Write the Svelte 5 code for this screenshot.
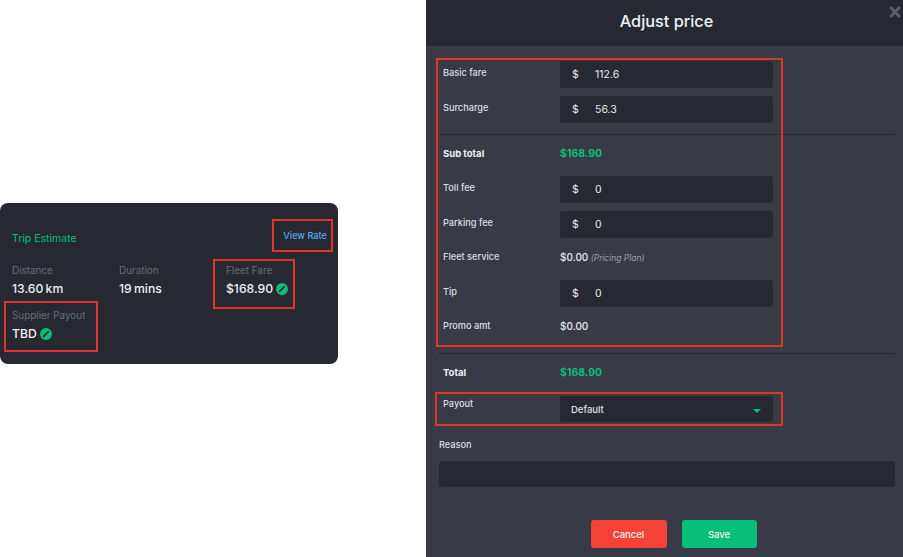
<script>
  const topRows = [
    { label: "Basic fare", value: "112.6" },
    { label: "Surcharge", value: "56.3" }
  ]
  const midRows = [
    { label: "Toll fee", value: "0" },
    { label: "Parking fee", value: "0" },
    { label: "Fleet service", text: "$0.00", note: "(Pricing Plan)" },
    { label: "Tip", value: "0" },
    { label: "Promo amt", text: "$0.00" }
  ]
</script>

{#snippet pencil()}
  <svg class="edit" viewBox="0 0 12 12" aria-hidden="true">
    <circle cx="6" cy="6" r="6" fill="#07bf78" />
    <path d="M3.6 8.4 L8.3 3.7" stroke="#20232b" stroke-width="1.6" stroke-linecap="round" />
  </svg>
{/snippet}

{#snippet row(r)}
  <div class="row">
    <span class="label">{r.label}</span>
    {#if r.value !== undefined}
      <div class="field">
        <span class="addon">$</span>
        <input value={r.value} />
      </div>
    {:else}
      <span class="static">{r.text}{#if r.note}<em>&nbsp;{r.note}</em>{/if}</span>
    {/if}
  </div>
{/snippet}

<div class="page">
  <div class="left">
    <section class="card">
      <div class="card-head">
        <h3>Trip Estimate</h3>
        <a href="#rate">View Rate</a>
        <i class="mark mark-rate"></i>
      </div>
      <div class="stats">
        <div class="stat">
          <span>Distance</span>
          <b>13.60 km</b>
        </div>
        <div class="stat">
          <span>Duration</span>
          <b>19 mins</b>
        </div>
        <div class="stat">
          <span>Fleet Fare</span>
          <b>$168.90 {@render pencil()}</b>
          <i class="mark mark-fare"></i>
        </div>
        <div class="stat">
          <span>Supplier Payout</span>
          <b>TBD {@render pencil()}</b>
          <i class="mark mark-payout"></i>
        </div>
      </div>
    </section>
  </div>

  <aside class="panel">
    <header>
      <h2>Adjust price</h2>
      <svg class="close" viewBox="0 0 12 12" aria-hidden="true">
        <path d="M1.2 1 L10.8 11 M10.8 1 L1.2 11" stroke="#5d616c" stroke-width="2.6" />
      </svg>
    </header>

    <div class="body">
      <i class="mark mark-fees"></i>
      <i class="mark mark-select"></i>

      {#each topRows as r}
        {@render row(r)}
      {/each}
      <hr />
      <div class="row">
        <span class="label strong">Sub total</span>
        <span class="static money">$168.90</span>
      </div>
      {#each midRows as r}
        {@render row(r)}
      {/each}
      <hr class="lower" />
      <div class="row">
        <span class="label strong">Total</span>
        <span class="static money">$168.90</span>
      </div>
      <div class="row">
        <span class="label payout">Payout</span>
        <div class="select">
          <span>Default</span>
          <i class="caret"></i>
        </div>
      </div>

      <label class="reason-label" for="reason">Reason</label>
      <input id="reason" class="reason" />

      <div class="actions">
        <button class="cancel">Cancel</button>
        <button class="save">Save</button>
      </div>
    </div>
  </aside>
</div>

<style>
  :global(body) {
    margin: 0;
    background: #fff;
  }

  .page {
    display: flex;
    width: 903px;
    height: 557px;
    overflow: hidden;
    font-family: Inter, "Liberation Sans", sans-serif;
    color: #e8e9eb;
  }

  .left {
    width: 426px;
    flex: none;
    padding-top: 203px;
    box-sizing: border-box;
  }

  .card {
    width: 338px;
    height: 161px;
    box-sizing: border-box;
    padding: 0 5px 0 12px;
    background: #262932;
    border-radius: 8px;
  }

  .card-head {
    position: relative;
    display: flex;
    justify-content: space-between;
    height: 53px;
    padding-top: 28px;
    box-sizing: border-box;
  }

  h3 {
    margin: 0;
    font-size: 10.5px;
    line-height: 16px;
    font-weight: 400;
    color: #07bf78;
  }

  a {
    margin: -3px 6px 0 0;
    font-size: 9.2px;
    line-height: 16px;
    font-weight: 500;
    color: #54a9ea;
    text-decoration: none;
  }

  .stats {
    display: grid;
    grid-template-columns: repeat(3, 107px);
    row-gap: 9px;
    margin-top: 6px;
  }

  .stat {
    position: relative;
    display: flex;
    flex-direction: column;
    height: 36px;
  }

  .stat span {
    font-size: 9.9px;
    line-height: 17px;
    color: #6a6d77;
  }

  .stat b {
    display: flex;
    align-items: center;
    gap: 3px;
    font-size: 12.2px;
    line-height: 19px;
    font-weight: 500;
    word-spacing: -1px;
    color: #f0f1f2;
  }

  .edit {
    width: 12px;
    height: 12px;
    margin-top: 1px;
  }

  .mark {
    position: absolute;
    box-sizing: border-box;
    border: 2px solid #e0352b;
    pointer-events: none;
  }

  .mark-rate {
    top: 16px;
    right: 0;
    width: 61px;
    height: 33px;
  }

  .mark-fare {
    top: -3px;
    left: -13px;
    width: 82px;
    height: 50px;
  }

  .mark-payout {
    top: -6px;
    left: -8px;
    width: 94px;
    height: 51px;
  }

  .panel {
    width: 477px;
    flex: none;
    background: #383b46;
    position: relative;
  }

  header {
    position: relative;
    height: 46px;
    background: #262932;
    text-align: center;
  }

  h2 {
    margin: 0;
    padding-left: 4px;
    font-size: 16.3px;
    line-height: 42px;
    font-weight: 500;
    color: #f0f1f2;
  }

  .close {
    position: absolute;
    top: 6px;
    right: 2px;
    width: 12px;
    height: 12px;
  }

  .body {
    padding: 15px 8px 0 13px;
    position: relative;
  }

  .mark-fees {
    top: 12px;
    left: 10px;
    width: 347px;
    height: 289px;
  }

  .mark-select {
    top: 346px;
    left: 9px;
    width: 348px;
    height: 34px;
  }

  .row {
    display: grid;
    grid-template-columns: 117px 213px;
    height: 26.5px;
    margin-bottom: 8px;
    padding-left: 4px;
    font-size: 10px;
  }

  .label {
    font-size: 9.2px;
    line-height: 24px;
    font-weight: 500;
    color: #dcdde0;
  }

  .payout {
    line-height: 16px;
  }

  .strong {
    font-size: 9.5px;
    font-weight: 700;
    color: #f0f1f2;
  }

  .static {
    line-height: 24px;
    font-weight: 500;
    color: #e8e9eb;
  }

  .static em {
    font-size: 8.6px;
    font-weight: 300;
    color: #b9bbc1;
  }

  .money {
    font-size: 10.5px;
    font-weight: 700;
    color: #07bf78;
  }

  .field {
    display: flex;
    border-radius: 3px;
    background: #262932;
    font-size: 10.5px;
  }

  .addon {
    width: 35px;
    padding-left: 12px;
    box-sizing: border-box;
    line-height: 27px;
    color: #e8e9eb;
  }

  input {
    min-width: 0;
    flex: 1;
    border: 0;
    padding: 0;
    background: transparent;
    font: inherit;
    color: #e8e9eb;
    outline: none;
  }

  .select {
    display: flex;
    align-items: center;
    justify-content: space-between;
    padding: 2px 12px 0 11px;
    border-radius: 3px;
    background: #262932;
    font-size: 9.5px;
    font-weight: 500;
    color: #e0e1e4;
  }

  .caret {
    width: 0;
    height: 0;
    margin-top: 3px;
    border-left: 4px solid transparent;
    border-right: 4px solid transparent;
    border-top: 4px solid #07bf78;
  }

  /* row margin-bottom collapses into this top margin */
  hr {
    height: 1px;
    margin: 11.5px 0 7px;
    border: 0;
    background: #262932;
  }

  hr.lower {
    margin-top: 12.5px;
  }

  .reason-label {
    display: block;
    margin-top: 11px;
    font-size: 9.2px;
    line-height: 24px;
    font-weight: 500;
    color: #dcdde0;
  }

  .reason {
    display: block;
    width: 100%;
    height: 26px;
    margin-top: 4px;
    border-radius: 3px;
    background: #262932;
  }

  .actions {
    display: flex;
    justify-content: center;
    gap: 15px;
    margin-top: 33px;
    padding-left: 13px;
  }

  button {
    height: 28px;
    border: 0;
    border-radius: 3px;
    font: 500 9.5px Inter, "Liberation Sans", sans-serif;
    color: #f3f3f3;
  }

  .cancel {
    width: 76px;
    background: #f44336;
  }

  .save {
    width: 75px;
    background: #07bf78;
  }
</style>
